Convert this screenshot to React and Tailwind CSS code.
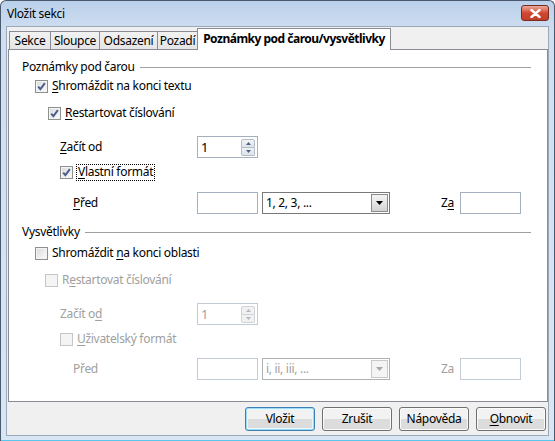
import React from "react";

function Check({ checked, disabled }) {
  return (
    <span
      className={`w-[13px] h-[13px] border flex items-center justify-center shrink-0 ${
        disabled
          ? "border-[#c6c6c6] bg-[#f4f4f4]"
          : "border-[#8e8f8f] bg-gradient-to-br from-[#d9d9d9] via-[#ececec] to-[#fbfbfb] shadow-[inset_0_0_0_1px_#f4f4f4]"
      }`}
    >
      {checked && (
        <svg width="9" height="9" viewBox="0 0 9 9">
          <path d="M1.2 4.6 L3.4 7.2 L7.9 1.2" stroke="#4a5f8f" strokeWidth="2" fill="none" />
        </svg>
      )}
    </span>
  );
}

function U({ children }) {
  return <span className="underline underline-offset-2 decoration-1">{children}</span>;
}

function Spin({ disabled }) {
  return (
    <div
      className={`w-[61px] h-[22px] border flex items-center justify-between pl-[3px] pr-[2px] bg-white ${
        disabled ? "border-[#c3cbd5] text-[#a0a0a0]" : "border-[#a5b0be] text-black"
      }`}
    >
      <span className="text-[13px]">1</span>
      <div className="flex flex-col w-[14px] h-[17px] gap-0">
        <div
          className={`flex-1 flex items-center justify-center border rounded-t-[2px] ${
            disabled ? "border-[#d0d4d9] bg-[#f1f1f1]" : "border-[#b4bcc6] bg-gradient-to-b from-[#f4f4f4] to-[#dde3ea]"
          }`}
        >
          <svg width="5" height="3" viewBox="0 0 5 3">
            <path d="M0 3 L2.5 0 L5 3Z" fill={disabled ? "#b8b8b8" : "#4d6185"} />
          </svg>
        </div>
        <div
          className={`flex-1 flex items-center justify-center border border-t-0 rounded-b-[2px] ${
            disabled ? "border-[#d0d4d9] bg-[#f1f1f1]" : "border-[#b4bcc6] bg-gradient-to-b from-[#eef1f4] to-[#dde3ea]"
          }`}
        >
          <svg width="5" height="3" viewBox="0 0 5 3">
            <path d="M0 0 L2.5 3 L5 0Z" fill={disabled ? "#b8b8b8" : "#4d6185"} />
          </svg>
        </div>
      </div>
    </div>
  );
}

function TextBox({ disabled }) {
  return (
    <div
      className={`w-[61px] h-[22px] border bg-white ${
        disabled ? "border-[#c3cbd5]" : "border-[#a5b0be]"
      }`}
    />
  );
}

function Combo({ text, disabled }) {
  return (
    <div
      className={`w-[128px] h-[22px] border bg-white flex items-center justify-between pl-[3px] pr-px ${
        disabled ? "border-[#adb2b5] text-[#a0a0a0]" : "border-[#7a7a7a] text-black"
      }`}
    >
      <span>{text}</span>
      <div
        className={`w-[17px] h-[18px] border flex items-center justify-center ${
          disabled
            ? "border-[#c9c9c9] bg-[#f4f4f4]"
            : "border-[#8a8a8a] bg-gradient-to-b from-[#f3f3f3] via-[#e6e6e6] to-[#d2d2d2]"
        }`}
      >
        <svg width="7" height="4" viewBox="0 0 7 4">
          <path d="M0 0 L7 0 L3.5 4Z" fill={disabled ? "#a8a8a8" : "#000"} />
        </svg>
      </div>
    </div>
  );
}

function Header({ children }) {
  return (
    <div className="flex items-center h-[18px] pl-[13px] pr-[16px]">
      <span>{children}</span>
      <div className="flex-1 h-px bg-[#a0a0a0] ml-[5px]" />
    </div>
  );
}

function Tab({ children, w }) {
  return (
    <div
      className={`${w} h-[18px] border-t border-l border-[#898c95] bg-gradient-to-b from-[#f2f2f2] to-[#e5e5e5] flex items-center justify-center whitespace-nowrap pt-[1px]`}
    >
      {children}
    </div>
  );
}

function Button({ children, primary }) {
  return (
    <div
      className={`w-[70px] h-[24px] rounded-[3px] border flex items-center justify-center bg-gradient-to-b from-[#f2f2f2] from-50% to-[#dcdcdc] to-50% ${
        primary
          ? "border-[#3c7fb1] shadow-[inset_0_0_0_1px_#9fdcf5,inset_0_0_0_2px_#e6f6fd]"
          : "border-[#707070] shadow-[inset_0_0_0_1px_#fbfbfb]"
      }`}
    >
      {children}
    </div>
  );
}

export default function App() {
  return (
    <div className="w-[555px] h-[441px] font-['Segoe_UI','Noto_Sans',sans-serif] text-[12px] tracking-[-0.3px] leading-none text-black bg-white">
      <div className="w-full h-full flex flex-col rounded-t-[6px] border border-[#4a5a6c] border-b-0 bg-gradient-to-b from-[#bad0ea] via-[#cfdff1] via-[30px] to-[#d9e6f3]">
        <div className="h-[25px] flex items-center justify-between pl-[6px] pr-[5px] shrink-0">
          <span className="text-[12px] text-black">Vložit sekci</span>
          <div className="w-[28px] h-[16px] rounded-[3px] border border-[#7a2a1d] bg-gradient-to-b from-[#e9a99c] via-[#d1462f] to-[#c1402b] flex items-center justify-center -mt-[1px]">
            <svg width="11" height="9" viewBox="0 0 11 9">
              <path d="M1.5 1 L9.5 8 M9.5 1 L1.5 8" stroke="#ffffff" strokeWidth="2.4" strokeLinecap="round" />
            </svg>
          </div>
        </div>
        <div className="flex-1 mx-[5px] mb-[5px] bg-[#f0f0f0] border border-[#9aa9ba] flex flex-col px-px">
          <div className="flex items-end pl-px mt-[1px] h-[21px]">
            <Tab w="w-[41px]">Sekce</Tab>
            <Tab w="w-[49px]">Sloupce</Tab>
            <Tab w="w-[58px]">Odsazení</Tab>
            <Tab w="w-[40px]">Pozadí</Tab>
            <div className="w-[194px] h-[22px] -mb-px relative z-10 border-t border-l border-r border-[#898c95] bg-white flex items-center justify-center font-bold whitespace-nowrap tracking-[-0.5px] pb-[1px]">
              Poznámky pod čarou/vysvětlivky
            </div>
          </div>
          <div className="w-[540px] h-[353px] border border-[#898c95] bg-white flex flex-col">
            <div className="mt-[8px]">
              <Header>Poznámky pod čarou</Header>
            </div>
            <div className="mt-[1px] h-[18px] flex items-center pl-[26px] gap-[4px]">
              <Check checked />
              <span>
                <U>S</U>hromáždit na konci textu
              </span>
            </div>
            <div className="mt-[9px] h-[18px] flex items-center pl-[39px] gap-[4px]">
              <Check checked />
              <span>
                <U>R</U>estartovat číslování
              </span>
            </div>
            <div className="mt-[14px] h-[22px] flex items-center pl-[51px]">
              <span className="w-[137px]">
                <U>Z</U>ačít od
              </span>
              <Spin />
            </div>
            <div className="mt-[5px] h-[18px] flex items-center pl-[51px] gap-[3px]">
              <Check checked />
              <span className="border border-dotted border-black px-px h-[17px] flex items-center">
                <span>
                  <U>V</U>lastní formát
                </span>
              </span>
            </div>
            <div className="mt-[11px] h-[22px] flex items-center pl-[64px]">
              <span className="w-[124px]">
                <U>P</U>řed
              </span>
              <TextBox />
              <div className="ml-[4px]">
                <Combo text="1, 2, 3, ..." />
              </div>
              <span className="ml-[51px] w-[19px]">
                Z<U>a</U>
              </span>
              <TextBox />
            </div>
            <div className="mt-[9px]">
              <Header>Vysvětlivky</Header>
            </div>
            <div className="mt-[3px] h-[18px] flex items-center pl-[26px] gap-[4px]">
              <Check />
              <span>
                Shromáždit <U>n</U>a konci oblasti
              </span>
            </div>
            <div className="mt-[9px] h-[18px] flex items-center pl-[36px] gap-[4px] text-[#a0a0a0]">
              <Check disabled />
              <span>
                R<U>e</U>startovat číslování
              </span>
            </div>
            <div className="mt-[14px] h-[22px] flex items-center pl-[51px] text-[#a0a0a0]">
              <span className="w-[137px]">
                Začít o<U>d</U>
              </span>
              <Spin disabled />
            </div>
            <div className="mt-[5px] h-[18px] flex items-center pl-[51px] gap-[4px] text-[#a0a0a0]">
              <Check disabled />
              <span>
                <U>U</U>živatelský formát
              </span>
            </div>
            <div className="mt-[10px] h-[22px] flex items-center pl-[64px] text-[#a0a0a0]">
              <span className="w-[124px]">Před</span>
              <TextBox disabled />
              <div className="ml-[4px]">
                <Combo text="i, ii, iii, ..." disabled />
              </div>
              <span className="ml-[51px] w-[19px]">Za</span>
              <TextBox disabled />
            </div>
          </div>
          <div className="mt-[5px] flex justify-end gap-[7px] pr-[1px]">
            <Button primary>Vložit</Button>
            <Button>Zrušit</Button>
            <Button>Nápověda</Button>
            <Button>
              <span>
                <U>O</U>bnovit
              </span>
            </Button>
          </div>
        </div>
        <div className="h-px bg-[#5bc6ec] -mt-px" />
      </div>
    </div>
  );
}
